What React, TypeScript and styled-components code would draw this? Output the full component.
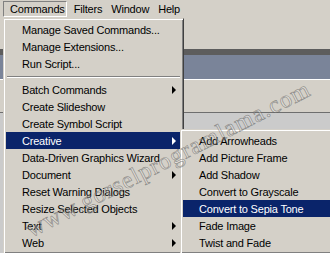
import React from "react";
import styled, { createGlobalStyle } from "styled-components";

const mainItems: { label: string; sub?: boolean; sep?: boolean; active?: boolean }[] = [
	{ label: "Manage Saved Commands..." },
	{ label: "Manage Extensions..." },
	{ label: "Run Script..." },
	{ label: "", sep: true },
	{ label: "Batch Commands", sub: true },
	{ label: "Create Slideshow" },
	{ label: "Create Symbol Script" },
	{ label: "Creative", sub: true, active: true },
	{ label: "Data-Driven Graphics Wizard" },
	{ label: "Document", sub: true },
	{ label: "Reset Warning Dialogs" },
	{ label: "Resize Selected Objects" },
	{ label: "Text", sub: true },
	{ label: "Web", sub: true },
];

const subItems = [
	"Add Arrowheads",
	"Add Picture Frame",
	"Add Shadow",
	"Convert to Grayscale",
	"Convert to Sepia Tone",
	"Fade Image",
	"Twist and Fade",
];

const App = () => {
	return (
		<Screen>
			<GlobalStyle />
			<MenuBar>
				<MenuTitle $open>Commands</MenuTitle>
				<MenuTitle>Filters</MenuTitle>
				<MenuTitle>Window</MenuTitle>
				<MenuTitle>Help</MenuTitle>
			</MenuBar>

			<Workspace>
				<Band $h={31} $color='#d4d0c8' />
				<Band $h={6} $color='#5d5d5d' />
				<Band $h={24} $color='#7a8499' />
				<Band $h={1} $color='#ffffff' />
				<Band $h={32} $color='#d4d0c8' />
				<Band $h={1} $color='#6e6e6e' />
				<Band $h={0} $color='#cbcbcb' $fill />
			</Workspace>

			<Dropdown $left={3} $top={18} $width={181}>
				{mainItems.map((it, i) =>
					it.sep ? (
						<Separator key={i} />
					) : (
						<Item key={i} $active={it.active}>
							{it.label}
							{it.sub && <Arrow $active={it.active} />}
						</Item>
					)
				)}
			</Dropdown>

			<Dropdown $left={180} $top={129} $width={160}>
				{subItems.map((label) => (
					<Item key={label} $active={label === "Convert to Sepia Tone"}>
						{label}
					</Item>
				))}
			</Dropdown>

			<Watermark>www.gorselprogramlama.com</Watermark>
		</Screen>
	);
};

export default App;

const GlobalStyle = createGlobalStyle`
	body {
		margin: 0;
		overflow: hidden;
		font-family: "Liberation Sans", Arial, sans-serif;
		letter-spacing: -0.2px;
	}
`;

const Screen = styled.div`
	position: relative;
	width: 330px;
	height: 253px;
	overflow: hidden;
	display: flex;
	flex-direction: column;
	background-color: #d4d0c8;
`;

const MenuBar = styled.div`
	height: 18px;
	display: flex;
	align-items: flex-start;
	padding: 1px 0 0 3px;
	box-sizing: border-box;
	background-color: #d4d0c8;
`;

const MenuTitle = styled.div<{ $open?: boolean }>`
	height: 16px;
	padding: 0 1px 0 6px;
	font-size: 11px;
	line-height: 15px;
	color: #000;
	box-sizing: border-box;
	border: 1px solid transparent;
	${(p) =>
		p.$open &&
		`
		border-color: #808080 #ffffff #ffffff #808080;
	`}
`;

const Workspace = styled.div`
	flex: 1;
	display: flex;
	flex-direction: column;
`;

const Band = styled.div<{ $h: number; $color: string; $fill?: boolean }>`
	height: ${(p) => p.$h}px;
	flex: ${(p) => (p.$fill ? 1 : "none")};
	background-color: ${(p) => p.$color};
`;

const Dropdown = styled.div<{ $left: number; $top: number; $width: number }>`
	position: absolute;
	left: ${(p) => p.$left}px;
	top: ${(p) => p.$top}px;
	width: ${(p) => p.$width}px;
	box-sizing: border-box;
	padding: 2px;
	background-color: #d4d0c8;
	border: 1px solid;
	border-color: #d4d0c8 #404040 #404040 #d4d0c8;
	box-shadow: inset 1px 1px #ffffff, inset -1px -1px #808080;
	display: flex;
	flex-direction: column;
`;

const Item = styled.div<{ $active?: boolean }>`
	height: 17px;
	display: flex;
	align-items: center;
	padding-left: 16px;
	font-size: 11px;
	white-space: nowrap;
	color: ${(p) => (p.$active ? "#ffffff" : "#000000")};
	background-color: ${(p) => (p.$active ? "#0a246a" : "transparent")};
`;

const Arrow = styled.span<{ $active?: boolean }>`
	margin-left: auto;
	margin-right: 5px;
	width: 0;
	height: 0;
	border-top: 4px solid transparent;
	border-bottom: 4px solid transparent;
	border-left: 4px solid ${(p) => (p.$active ? "#ffffff" : "#000000")};
`;

const Separator = styled.div`
	height: 9px;
	display: flex;
	align-items: center;
	padding: 0 1px;

	&::after {
		content: "";
		flex: 1;
		height: 0;
		border-top: 1px solid #808080;
		border-bottom: 1px solid #ffffff;
	}
`;

const Watermark = styled.div`
	position: absolute;
	left: 34px;
	top: 216px;
	font-family: "Liberation Serif", "Times New Roman", serif;
	font-size: 24px;
	letter-spacing: 1px;
	white-space: nowrap;
	color: rgba(255, 255, 255, 0.3);
	-webkit-text-stroke: 0.7px rgba(80, 80, 80, 0.55);
	transform: rotate(-27deg);
	transform-origin: left bottom;
	pointer-events: none;
`;
